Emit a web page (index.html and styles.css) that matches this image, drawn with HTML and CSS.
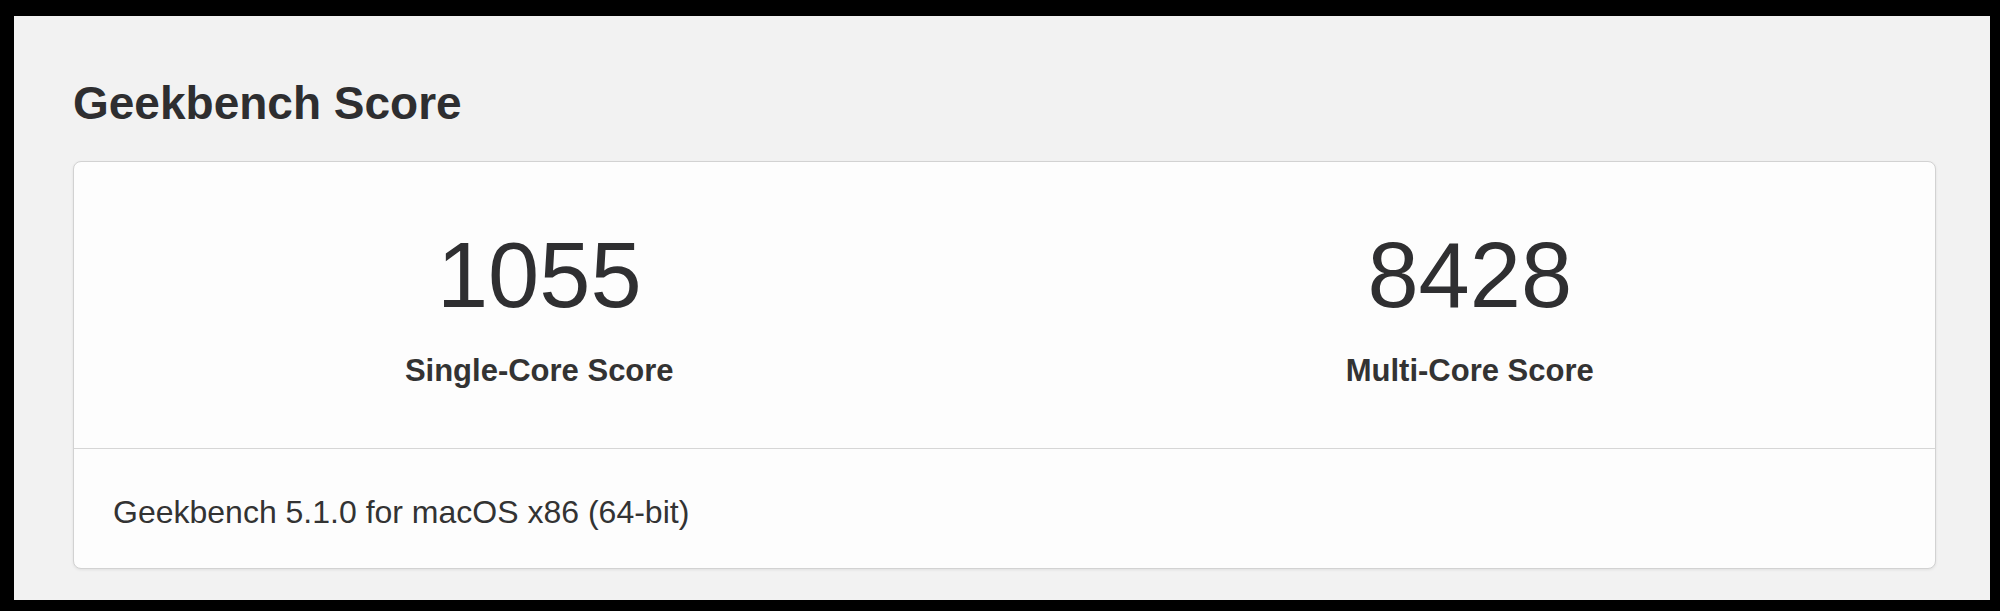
FILE: index.html
```html
<!DOCTYPE html>
<html lang="en">
<head>
    <meta charset="UTF-8">
    <meta name="viewport" content="width=device-width, initial-scale=1.0">
    <title>Geekbench Score</title>
    <link rel="stylesheet" href="styles.css">
</head>
<body>
    <div id="frame">
        <div id="page">
            <h2 class="section-title">Geekbench Score</h2>

            <div class="card">
                <div class="scores">
                    <div class="score">
                        <div class="score-value">1055</div>
                        <div class="score-label">Single-Core Score</div>
                    </div>
                    <div class="score">
                        <div class="score-value">8428</div>
                        <div class="score-label">Multi-Core Score</div>
                    </div>
                </div>
                <div class="card-footer">Geekbench 5.1.0 for macOS x86 (64-bit)</div>
            </div>
        </div>
    </div>
</body>
</html>
```

FILE: styles.css
```css
/* 外框：黑色边 */
body {
    margin: 0;
    background-color: #000;
    font-family: "Liberation Sans", Arial, Helvetica, sans-serif;
    color: #333;
}
#frame {
    padding: 16px 10px 11px 14px;
}
#page {
    background-color: #f2f2f2;
    height: 584px;
    box-sizing: border-box;
    padding: 60px 54px 0 59px;
}

/* 标题 */
.section-title {
    margin: 0 0 31px 0;
    font-size: 46px;
    line-height: 54px;
    font-weight: bold;
    color: #2e2e30;
}

/* 卡片 */
.card {
    background-color: #fdfdfd;
    border: 1px solid #d2d2d2;
    border-radius: 8px;
    box-shadow: 0 1px 3px rgba(0, 0, 0, 0.08);
}
.scores {
    display: flex;
    padding: 67px 0 59px 0;
    border-bottom: 1px solid #d6d6d6;
}
.score {
    flex: 1;
    text-align: center;
}
.score-value {
    font-size: 92px;
    line-height: 92px;
    color: #2f2f31;
}
.score-label {
    margin-top: 31px;
    font-size: 31px;
    line-height: 37px;
    font-weight: bold;
}
.card-footer {
    padding: 44px 39px 37px 39px;
    font-size: 32px;
    line-height: 38px;
}
```
